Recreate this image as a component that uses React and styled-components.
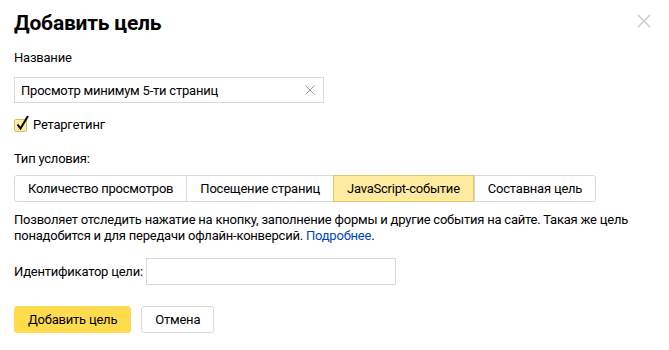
import React, {useState} from 'react'
import styled, {createGlobalStyle} from 'styled-components'

const Global = createGlobalStyle`
  body {
    margin: 0;
    background: #fff;
    font-family: Roboto, "Liberation Sans", sans-serif;
    color: #000;
  }
`

const Dialog = styled.div`
  position: relative;
  width: 669px;
  height: 350px;
  box-sizing: border-box;
  padding: 9px 14px 0 14px;
  background: #fff;
  font-size: 13px;
  letter-spacing: -0.22px;
`

const Title = styled.h1`
  margin: 0;
  font-size: 21px;
  line-height: 28px;
  font-weight: 700;
  letter-spacing: -0.2px;
`

const Close = styled.button`
  position: absolute;
  top: 14px;
  right: 18px;
  width: 14px;
  height: 14px;
  padding: 0;
  border: none;
  background: transparent;
  svg { display: block; }
`

const Label = styled.div`
  line-height: 16px;
  margin-top: ${props => props.top}px;
`

const InputWrap = styled.div`
  width: 310px;
  height: 26px;
  margin-top: 11px;
  box-sizing: border-box;
  border: 1px solid #d9d9d9;
  display: flex;
  align-items: center;
`

const TextInput = styled.input`
  flex: 1;
  border: none;
  outline: none;
  height: 100%;
  padding: 0 0 0 6px;
  font: inherit;
  letter-spacing: inherit;
  color: #000;
  background: transparent;
`

const Clear = styled.span`
  width: 26px;
  display: flex;
  justify-content: center;
`

const CheckRow = styled.label`
  display: flex;
  align-items: center;
  gap: 6px;
  margin-top: 14px;
  line-height: 16px;
`

const Box = styled.span`
  position: relative;
  width: 13px;
  height: 13px;
  margin-top: 1px;
  border-radius: 2px;
  box-sizing: border-box;
  border: 1px solid #d6bd6a;
  background: #ffeba0;
  svg {
    position: absolute;
    left: 0;
    top: -6px;
  }
`

const Tabs = styled.div`
  display: inline-flex;
  margin-top: 8px;
  border: 1px solid #d9d9d9;
  border-radius: 3px;
  height: 27px;
  box-sizing: border-box;
`

const Tab = styled.div`
  display: flex;
  align-items: center;
  padding: 0 13px;
  border-left: 1px solid #d9d9d9;
  background: ${props => props.active ? '#ffeba0' : '#fff'};
  ${props => props.active && 'margin: -1px 0; border: 1px solid #e0c766;'}
  ${props => props.first && 'border-left: none; border-radius: 3px 0 0 3px;'}
  ${props => props.last && 'border-radius: 0 3px 3px 0;'}
`

const Text = styled.p`
  margin: 10px 0 0;
  line-height: 16px;
  width: 630px;
  a { color: #04b; text-decoration: none; }
`

const IdRow = styled.div`
  display: flex;
  align-items: center;
  gap: 3px;
  margin-top: 14px;
`

const IdInput = styled.input`
  width: 250px;
  height: 27px;
  box-sizing: border-box;
  border: 1px solid #d9d9d9;
  outline: none;
  font: inherit;
`

const Buttons = styled.div`
  display: flex;
  gap: 10px;
  margin-top: 21px;
`

const Button = styled.button`
  height: 27px;
  padding: 0 13px;
  box-sizing: border-box;
  border-radius: 3px;
  font: inherit;
  letter-spacing: inherit;
  color: #000;
  border: 1px solid ${props => props.primary ? '#ffdb4d' : '#d9d9d9'};
  background: ${props => props.primary ? '#ffdb4d' : '#fff'};
`

const tabs = ['Количество просмотров', 'Посещение страниц', 'JavaScript-событие', 'Составная цель']

export default function App() {
  const [active] = useState(2)
  return (
    <Dialog>
      <Global/>
      <Title>Добавить цель</Title>
      <Close>
        <svg width="14" height="14" viewBox="0 0 14 14">
          <path d="M1 1 L13 13 M13 1 L1 13" stroke="#ccc" strokeWidth="1.5"/>
        </svg>
      </Close>
      <Label top={13}>Название</Label>
      <InputWrap>
        <TextInput defaultValue="Просмотр минимум 5-ти страниц"/>
        <Clear>
          <svg width="10" height="10" viewBox="0 0 10 10">
            <path d="M0.5 0.5 L9.5 9.5 M9.5 0.5 L0.5 9.5" stroke="#999" strokeWidth="1"/>
          </svg>
        </Clear>
      </InputWrap>
      <CheckRow>
        <Box>
          <svg width="16" height="17" viewBox="0 0 16 17">
            <path d="M2.5 10.5 L5.5 14.5 L13 2" stroke="#000" strokeWidth="2" fill="none"/>
          </svg>
        </Box>
        Ретаргетинг
      </CheckRow>
      <Label top={18}>Тип условия:</Label>
      <Tabs>
        {tabs.map((t, i) => (
          <Tab key={t} first={i === 0} last={i === tabs.length - 1} active={i === active}>{t}</Tab>
        ))}
      </Tabs>
      <Text>
        Позволяет отследить нажатие на кнопку, заполнение формы и другие события на сайте. Такая же цель понадобится и для передачи офлайн-конверсий. <a href="#">Подробнее</a>.
      </Text>
      <IdRow>
        Идентификатор цели:
        <IdInput/>
      </IdRow>
      <Buttons>
        <Button primary>Добавить цель</Button>
        <Button>Отмена</Button>
      </Buttons>
    </Dialog>
  )
}
